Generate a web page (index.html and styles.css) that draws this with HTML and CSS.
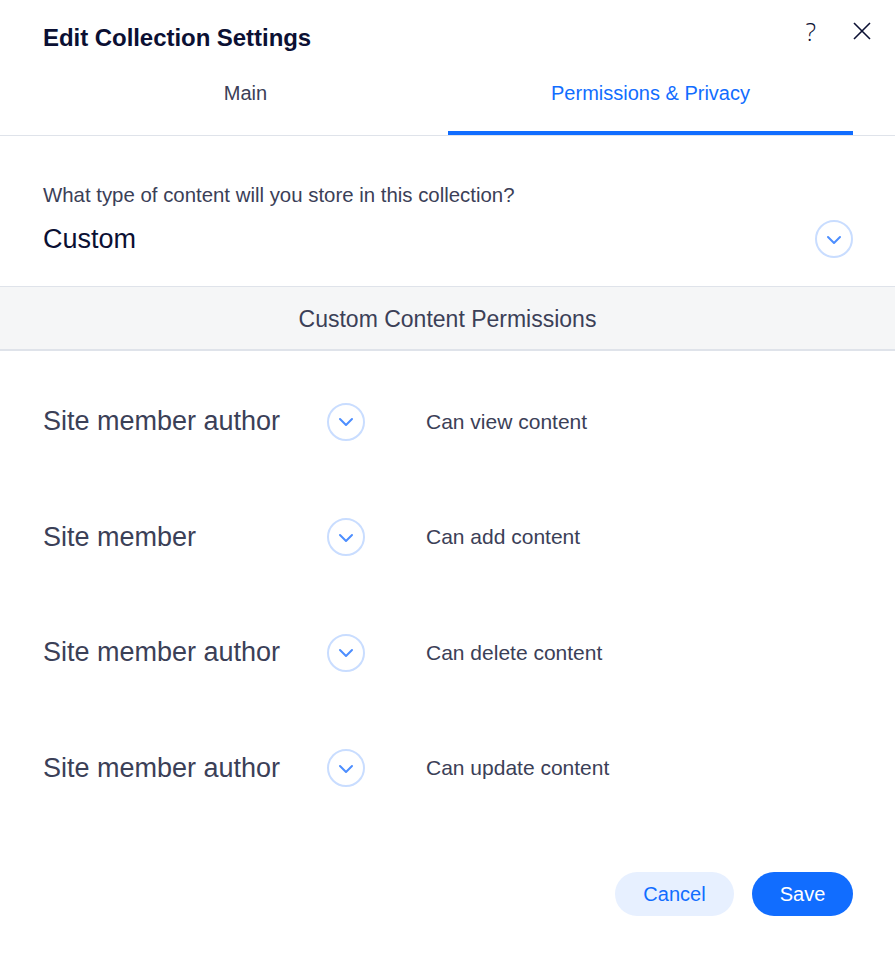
FILE: index.html
```html
<!DOCTYPE html>
<html>
<head>
<meta charset="utf-8">
<link rel="stylesheet" href="styles.css">
</head>
<body>
<div class="modal">
  <div class="title-row">
    <h1 class="title">Edit Collection Settings</h1>
    <div class="actions">
      <span class="help">?</span>
      <svg class="close" width="18" height="18" viewBox="0 0 18 18"><path d="M1 1L17 17M17 1L1 17" stroke="#0b1033" stroke-width="1.6" fill="none"/></svg>
    </div>
  </div>
  <div class="tabs-wrap">
    <div class="tabs">
      <div class="tab">Main</div>
      <div class="tab active">Permissions &amp; Privacy</div>
    </div>
  </div>
  <div class="content-type">
    <div class="question">What type of content will you store in this collection?</div>
    <div class="select-row">
      <span class="select-value">Custom</span>
      <span class="chev"><svg width="16" height="10" viewBox="0 0 16 10"><path d="M2 2L8 8L14 2" stroke="#4d8eff" stroke-width="2" fill="none" stroke-linecap="round" stroke-linejoin="round"/></svg></span>
    </div>
  </div>
  <div class="section-head">Custom Content Permissions</div>
  <div class="perms">
    <div class="perm-row">
      <span class="role">Site member author</span>
      <span class="chev"><svg width="16" height="10" viewBox="0 0 16 10"><path d="M2 2L8 8L14 2" stroke="#4d8eff" stroke-width="2" fill="none" stroke-linecap="round" stroke-linejoin="round"/></svg></span>
      <span class="action">Can view content</span>
    </div>
    <div class="perm-row">
      <span class="role">Site member</span>
      <span class="chev"><svg width="16" height="10" viewBox="0 0 16 10"><path d="M2 2L8 8L14 2" stroke="#4d8eff" stroke-width="2" fill="none" stroke-linecap="round" stroke-linejoin="round"/></svg></span>
      <span class="action">Can add content</span>
    </div>
    <div class="perm-row">
      <span class="role">Site member author</span>
      <span class="chev"><svg width="16" height="10" viewBox="0 0 16 10"><path d="M2 2L8 8L14 2" stroke="#4d8eff" stroke-width="2" fill="none" stroke-linecap="round" stroke-linejoin="round"/></svg></span>
      <span class="action">Can delete content</span>
    </div>
    <div class="perm-row">
      <span class="role">Site member author</span>
      <span class="chev"><svg width="16" height="10" viewBox="0 0 16 10"><path d="M2 2L8 8L14 2" stroke="#4d8eff" stroke-width="2" fill="none" stroke-linecap="round" stroke-linejoin="round"/></svg></span>
      <span class="action">Can update content</span>
    </div>
  </div>
  <div class="footer">
    <button class="btn btn-secondary">Cancel</button>
    <button class="btn btn-primary">Save</button>
  </div>
</div>
</body>
</html>
```

FILE: styles.css
```css
* { box-sizing: border-box; }
html, body { margin: 0; padding: 0; background: #ffffff; }
body {
  font-family: "Liberation Sans", Arial, sans-serif;
  color: #3b4057;
}
.modal {
  width: 895px;
  height: 961px;
  background: #fff;
}
.title-row {
  height: 74px;
  display: flex;
  align-items: center;
  justify-content: space-between;
  padding: 0 24px 0 43px;
}
.title {
  margin: 0;
  font-size: 24px;
  font-weight: bold;
  color: #0b1033;
  letter-spacing: -0.05px;
  padding-top: 1px;
}
.actions {
  display: flex;
  align-items: center;
  gap: 37px;
  padding-bottom: 12px;
}
.help {
  font-family: "Open Sans", "Liberation Sans", sans-serif;
  font-size: 25px;
  color: #0b1033;
  font-weight: 300;
  line-height: 1;
}
.close { display: block; }
.tabs-wrap {
  border-bottom: 1px solid #dfe3ea;
}
.tabs {
  display: flex;
  padding: 0 42px 0 43px;
  height: 61px;
}
.tab {
  flex: 1;
  text-align: center;
  font-size: 20px;
  line-height: 24px;
  padding-top: 7px;
  color: #3b4057;
}
.tab.active {
  color: #116dff;
  border-bottom: 4px solid #116dff;
}
.content-type {
  padding: 47px 42px 27px 43px;
}
.question {
  font-size: 20.4px;
  line-height: 24px;
  color: #3b4057;
}
.select-row {
  margin-top: 12px;
  height: 40px;
  display: flex;
  align-items: center;
  justify-content: space-between;
}
.select-value {
  font-size: 27px;
  color: #0b1033;
}
.chev {
  width: 38px;
  height: 38px;
  border-radius: 50%;
  border: 2px solid #c9ddff;
  display: flex;
  align-items: center;
  justify-content: center;
  flex-shrink: 0;
}
.chev svg { display: block; margin-top: 1px; }
.section-head {
  height: 65px;
  background: #f5f6f7;
  border-top: 1px solid #dfe3ea;
  border-bottom: 2px solid #dfe3ea;
  display: flex;
  align-items: center;
  justify-content: center;
  font-size: 23px;
  color: #3b4057;
  padding-top: 2px;
}
.perms {
  padding: 13px 42px 0 43px;
}
.perm-row {
  height: 115.5px;
  display: flex;
  align-items: center;
}
.role {
  width: 284px;
  font-size: 27px;
  color: #3b4057;
}
.action {
  margin-left: 61px;
  font-size: 21px;
  color: #3b4057;
}
.footer {
  display: flex;
  justify-content: flex-end;
  gap: 18px;
  padding: 46px 42px 0 0;
}
.btn {
  height: 44px;
  border: none;
  border-radius: 22px;
  font-family: "Liberation Sans", Arial, sans-serif;
  font-size: 20px;
  padding: 0;
  cursor: pointer;
}
.btn-secondary {
  width: 119px;
  background: #e7f0ff;
  color: #116dff;
}
.btn-primary {
  width: 101px;
  background: #116dff;
  color: #fff;
}
```
